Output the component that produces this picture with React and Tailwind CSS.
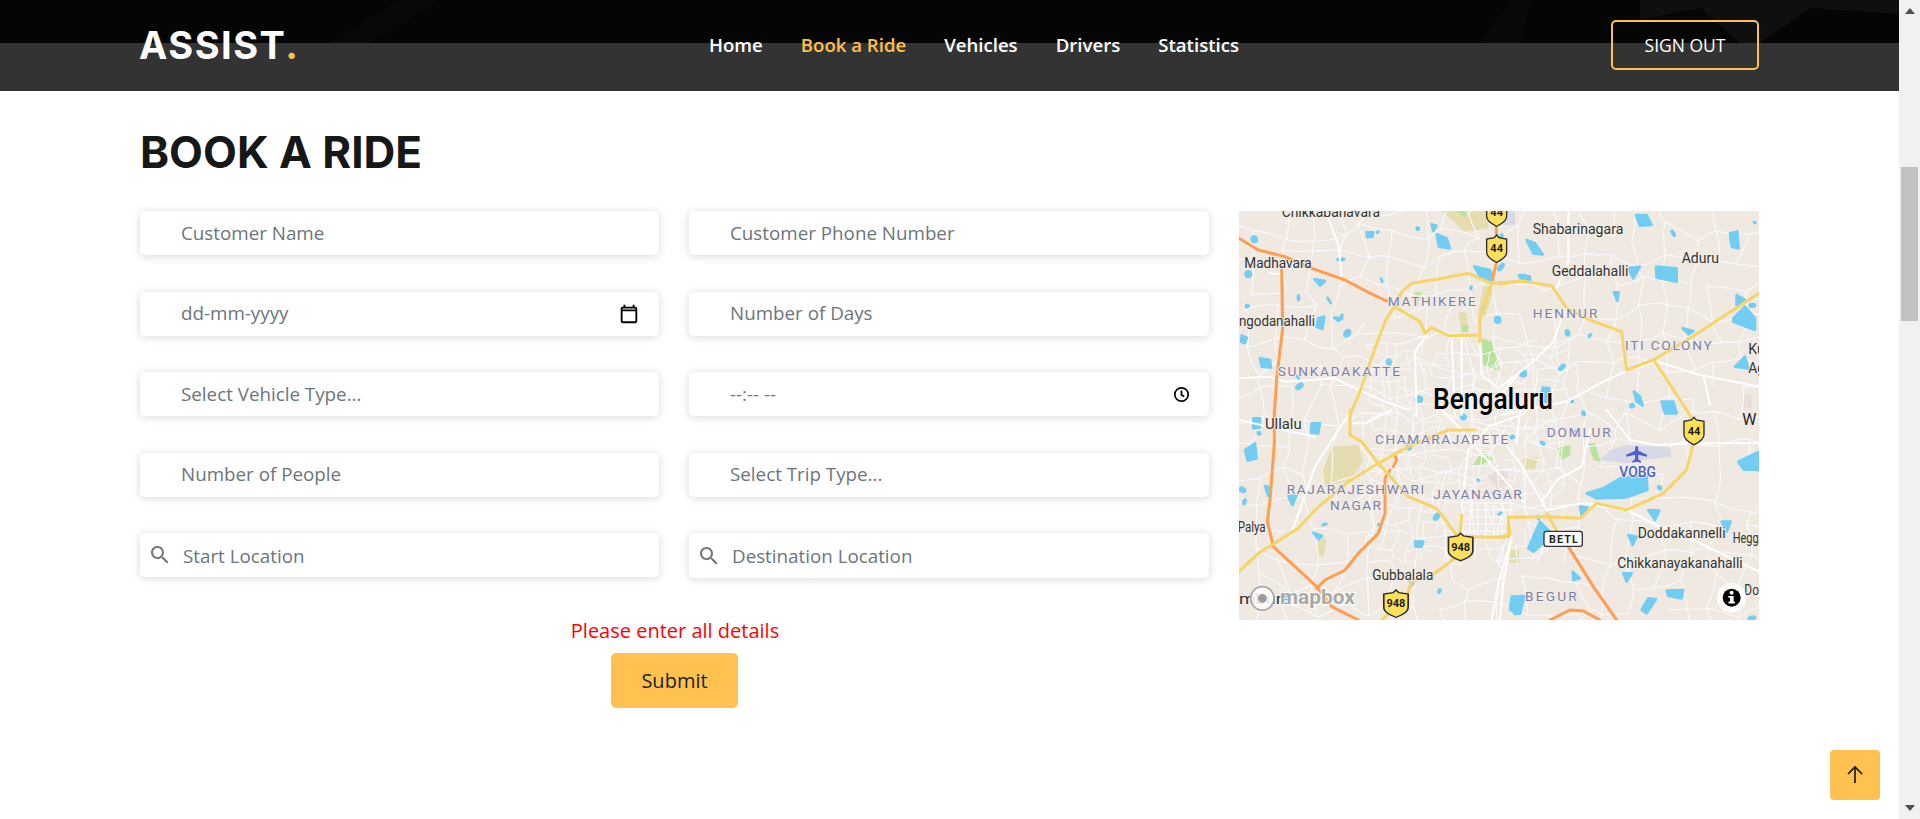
const SEARCH = 'M15.5 14h-.79l-.28-.27C15.41 12.59 16 11.11 16 9.5 16 5.91 13.09 3 9.5 3S3 5.91 3 9.5 5.91 16 9.5 16c1.61 0 3.09-.59 4.23-1.57l.27.28v.79l5 4.99L20.49 19l-4.99-5zm-6 0C7.01 14 5 11.99 5 9.5S7.01 5 9.5 5 14 7.01 14 9.5 11.99 14 9.5 14z'

const NAV = ['Home', 'Book a Ride', 'Vehicles', 'Drivers', 'Statistics']

const FIELDS = [
  { text: 'Customer Name' },
  { text: 'Customer Phone Number' },
  { text: 'dd-mm-yyyy', icon: 'calendar' },
  { text: 'Number of Days' },
  { text: 'Select Vehicle Type...' },
  { text: '--:-- --', icon: 'clock' },
  { text: 'Number of People' },
  { text: 'Select Trip Type...' },
  { text: 'Start Location', search: true },
  { text: 'Destination Location', search: true },
]

/* map panels: coordinates are read off the 3x crops */
const PANELS = {
  a: 'translate(1235 205) scale(0.3333)',
  b: 'translate(1500 205) scale(0.3333)',
  c: 'translate(1235 410) scale(0.3333)',
  d: 'translate(1500 410) scale(0.3333)',
}

const WHITE = [
  ['a', '280,40 310,120 320,210'],
  ['a', '12,520 100,515 150,530 300,520 350,545 450,590 520,615'],
  ['a', '545,630 540,440 575,390'],
  ['a', '650,395 660,630'],
  ['a', '680,400 680,630'],
  ['a', '735,410 740,510 790,550 870,490'],
  ['a', '105,205 140,208'],
  ['b', '205,20 205,170 170,250'],
  ['b', '195,310 160,410 110,460 60,500 0,570'],
  ['b', '0,630 200,590 300,535 385,495 470,470 600,510 777,545'],
  ['b', '610,510 630,600'],
  ['c', '350,0 300,75 240,170 180,340 165,380'],
  ['c', '470,0 390,40 345,40'],
  ['c', '12,30 100,50 240,80'],
  ['c', '680,290 700,120 760,50 870,10'],
  ['c', '830,385 790,520 770,630'],
  ['c', '620,0 680,60 740,130 800,200 870,280'],
  ['d', '0,80 60,160 140,300 240,280 380,300 480,350 600,400 777,485'],
  ['d', '60,0 50,100'],
  ['d', '130,270 170,210 245,170 270,60'],
  ['d', '320,0 390,90 470,105 560,100 777,100'],
  ['d', '35,380 10,520 0,630'],
]

const ORANGE = [
  ['a', '12,100 70,135 150,155 230,190 330,225 400,262 455,288'],
  ['a', '140,195 143,370 125,520 118,630'],
  ['a', '783,50 785,90'],
  ['a', '785,170 772,225'],
  ['c', '118,0 118,100 105,270 97,335 115,410 245,530 290,590 370,630'],
  ['c', '480,135 485,150 475,170'],
  ['c', '465,180 450,205 450,310 430,370 370,430 330,480 270,510 245,535'],
  ['d', '205,410 280,530 350,630'],
  ['d', '150,630 210,600 250,603 300,630'],
]

const YELLOW = [
  ['a', '345,630 375,560 420,430 450,350 478,305 500,260 530,235 610,222 700,205 770,235 870,228'],
  ['a', '478,305 555,350 570,385 590,368 640,392 735,390'],
  ['a', '735,410 735,340 770,235'],
  ['b', '0,238 60,228 155,242 200,310 270,345 365,380 380,495 460,465 570,400 777,265'],
  ['b', '465,470 570,630'],
  ['c', '345,0 345,75 380,95 430,160 520,260 605,295 665,375'],
  ['c', '430,160 520,110 640,60 720,60'],
  ['c', '12,485 70,430 190,355 240,300 340,215 430,160'],
  ['c', '680,315 675,370'],
  ['c', '870,322 820,322 825,375 790,382 700,380'],
  ['c', '660,445 600,490 530,515 510,570 440,630'],
  ['d', '560,0 578,30 578,110 560,180 490,250 380,300 290,280 240,325 150,320 25,322 25,380 0,382'],
  ['d', '140,310 180,380'],
]

const PARKS = [
  ['a', '#e5dcb0', '620,18 760,18 760,70 690,80'],
  ['a', '#b9e29c', '665,18 700,18 690,38'],
  ['a', '#d8d9e6', '810,18 840,18 840,60 805,60'],
  ['a', '#e5dcb0', '745,245 780,240 750,340 725,350'],
  ['a', '#e5dcb0', '670,320 695,325 700,380 680,380'],
  ['a', '#b9e29c', '680,360 700,360 700,382 680,382'],
  ['a', '#b9e29c', '740,398 770,410 798,502 745,480'],
  ['a', '#b9e29c', '540,262 560,262 550,300 535,290'],
  ['c', '#e5dcb0', '290,110 370,105 385,150 350,210 270,230 265,180'],
  ['c', '#b9e29c', '740,125 775,145 740,165 715,165'],
  ['c', '#eadbdc', '755,195 790,175 820,215 790,240'],
  ['c', '#e5dcb0', '250,390 275,385 265,440 245,435'],
  ['c', '#e5dcb0', '825,425 850,420 852,455 828,460'],
  ['d', '#b9e29c', '170,115 210,105 212,135 185,150'],
  ['d', '#b9e29c', '265,100 285,100 302,155 280,150'],
  ['d', '#e5dcb0', '65,145 115,140 105,178 78,175'],
  ['d', '#eadbdc', '0,170 25,190 20,225 0,230'],
  ['d', '#e5dcb0', '28,420 55,420 58,460 25,455'],
  ['b', '#eadbdc', '730,570 755,570 755,610 730,610'],
]

const LAKES = [
  ['a', '605,88 635,100 645,130 612,125'],
  ['a', '718,185 765,195 775,225 740,222'],
  ['a', '75,460 105,465 108,488 80,485'],
  ['a', '250,340 268,335 262,372 245,365'],
  ['a', '238,222 270,228 255,242'],
  ['a', '20,392 36,398 28,415 18,410'],
  ['a', '590,58 605,62 595,78'],
  ['a', '395,82 415,82 412,96 396,96'],
  ['a', '298,338 322,340 310,348'],
  ['a', '852,212 870,210 870,224'],
  ['b', '408,30 440,30 455,60 420,62'],
  ['b', '80,105 105,115 128,148 100,145'],
  ['b', '468,185 530,190 530,230 470,218'],
  ['b', '690,85 712,80 716,130 695,125'],
  ['b', '700,340 735,305 765,340 765,375 700,350'],
  ['b', '710,270 735,285 710,300'],
  ['b', '385,190 420,185 400,220'],
  ['b', '342,262 356,262 352,288'],
  ['b', '548,370 580,378 565,388'],
  ['b', '485,590 520,590 530,625 495,625'],
  ['b', '402,560 420,575 428,602 410,590'],
  ['b', '128,548 148,550 146,590 120,590'],
  ['b', '735,455 745,490 705,485'],
  ['b', '60,210 90,215 90,225 62,222'],
  ['c', '30,120 60,100 65,145 38,152'],
  ['c', '230,40 255,40 250,70 228,68'],
  ['c', '55,25 75,25 75,52 55,55'],
  ['c', '235,368 262,378 250,388'],
  ['c', '540,395 565,395 560,410 542,410'],
  ['c', '160,258 185,255 172,285'],
  ['c', '90,228 102,232 100,258'],
  ['c', '830,560 868,558 855,610 825,600'],
  ['c', '525,510 535,520 528,528'],
  ['d', '260,250 310,235 360,205 440,195 442,240 380,262 290,265'],
  ['d', '120,335 150,365 130,400 100,425 85,415'],
  ['d', '715,155 777,125 777,180 730,178'],
  ['d', '500,542 550,540 545,565 505,558'],
  ['d', '445,565 468,568 440,610 425,600'],
  ['d', '30,585 70,560 60,610 45,612'],
  ['d', '385,375 410,380 398,405'],
  ['d', '445,300 478,302 465,330'],
  ['d', '240,290 262,292 245,318'],
  ['d', '218,485 240,505 220,510'],
  ['d', '665,335 692,335 680,365'],
  ['d', '370,490 395,490 380,515'],
]

const LABELS = [
  ['a', 'Chikkabanavara', 140, 35, 295],
  ['a', 'Madhavara', 28, 190, 202],
  ['a', 'ngodanahalli', 12, 362, 228],
  ['a', 'MATHIKERE', 458, 302, 264, 1],
  ['a', 'SUNKADAKATTE', 128, 513, 367, 1],
  ['b', 'Shabarinagara', 98, 87, 272],
  ['b', 'Aduru', 545, 173, 112],
  ['b', 'Geddalahalli', 155, 213, 230],
  ['b', 'HENNUR', 98, 340, 194, 1],
  ['b', 'ITI COLONY', 375, 435, 260, 1],
  ['b', 'Ku', 745, 447, 50],
  ['b', 'Ag', 745, 503, 50],
  ['c', 'Ullalu', 90, 57, 110],
  ['c', 'CHAMARAJAPETE', 420, 103, 400, 1],
  ['c', 'RAJARAJESHWARI', 155, 252, 413, 1],
  ['c', 'NAGAR', 285, 300, 153, 1],
  ['c', 'JAYANAGAR', 595, 266, 265, 1],
  ['c', 'Palya', 8, 366, 84],
  ['c', 'Gubbalala', 412, 510, 183],
  ['c', 'mbura', 12, 583, 158],
  ['d', 'DOMLUR', 140, 80, 192, 1],
  ['d', 'BEGUR', 75, 572, 155, 1],
  ['d', 'Doddakannelli', 413, 385, 264],
  ['d', 'Hegg', 698, 398, 78],
  ['d', 'Chikkanayakanahalli', 352, 473, 376],
  ['d', 'Do', 733, 555, 44],
]

const SHIELDS = [
  ['a', 785, 22, '44', 1],
  ['a', 785, 130, '44', 1],
  ['d', 582, 62, '44', 1],
  ['c', 677, 410, '948', 1.22],
  ['c', 483, 580, '948', 1.22],
]

function seeded(seed) {
  let s = seed
  return () => {
    s = (s * 16807) % 2147483647
    return s / 2147483647
  }
}

/* small seeded mesh for the minor streets, each edge slightly bent */
function mesh(x0, y0, x1, y1, step, keep, seed) {
  const rnd = seeded(seed)
  const cols = Math.ceil((x1 - x0) / step)
  const rows = Math.ceil((y1 - y0) / step)
  const nodes = []
  for (let j = 0; j <= rows; j++) {
    for (let i = 0; i <= cols; i++) {
      nodes.push([x0 + i * step + (rnd() - 0.5) * step * 0.75, y0 + j * step + (rnd() - 0.5) * step * 0.75])
    }
  }
  const edge = (n, m) => {
    const cx = (n[0] + m[0]) / 2 + (rnd() - 0.5) * step * 0.35
    const cy = (n[1] + m[1]) / 2 + (rnd() - 0.5) * step * 0.35
    return `M${n[0].toFixed(1)} ${n[1].toFixed(1)}Q${cx.toFixed(1)} ${cy.toFixed(1)} ${m[0].toFixed(1)} ${m[1].toFixed(1)}`
  }
  let d = ''
  for (let j = 0; j <= rows; j++) {
    for (let i = 0; i <= cols; i++) {
      const n = nodes[j * (cols + 1) + i]
      if (i < cols && rnd() < keep) d += edge(n, nodes[j * (cols + 1) + i + 1])
      if (j < rows && rnd() < keep) d += edge(n, nodes[(j + 1) * (cols + 1) + i])
    }
  }
  return d
}

function specks(count, seed) {
  const rnd = seeded(seed)
  return Array.from({ length: count }, () => ({
    x: 1239 + rnd() * 520,
    y: 211 + rnd() * 409,
    rx: 1.5 + rnd() * 2.5,
    ry: 1.5 + rnd() * 3.5,
    a: rnd() * 180,
  }))
}

const OUTER_STREETS = mesh(1230, 205, 1770, 630, 27, 0.78, 4711)
const CITY_STREETS = mesh(1370, 340, 1560, 550, 13, 0.72, 91)
const SPECKS = specks(50, 2024)

function CityGrid() {
  const lines = []
  for (let x = 1462; x <= 1512; x += 8) lines.push(`M${x} 503V537`)
  for (let y = 503; y <= 537; y += 7) lines.push(`M1462 ${y}H1512`)
  return <path d={lines.join('')} stroke="#fbfbfe" strokeWidth="1.2" fill="none" />
}

function Roads({ data, color, width }) {
  return data.map(([p, pts], i) => (
    <polyline key={i} transform={PANELS[p]} points={pts} fill="none" stroke={color} strokeWidth={width} strokeLinejoin="round" strokeLinecap="round" />
  ))
}

function BookingMap() {
  return (
    <svg viewBox="1239 211 520 409" className="w-[520px] h-[409px] block" style={{ fontFamily: 'Roboto, sans-serif' }}>
      <rect x="1239" y="211" width="520" height="409" fill="#efe9e2" />
      {PARKS.map(([p, c, pts], i) => <polygon key={i} transform={PANELS[p]} points={pts} fill={c} />)}
      <path d={OUTER_STREETS} stroke="#f9f9fd" strokeWidth="1.1" fill="none" />
      <path d={CITY_STREETS} stroke="#fafafe" strokeWidth="1" fill="none" />
      <CityGrid />
      {SPECKS.map((s, i) => (
        <ellipse key={i} cx={s.x} cy={s.y} rx={s.rx} ry={s.ry} fill="#72cdf2" transform={`rotate(${s.a} ${s.x} ${s.y})`} />
      ))}
      {LAKES.map(([p, pts], i) => (
        <polygon key={i} transform={PANELS[p]} points={pts} fill="#72cdf2" stroke="#72cdf2" strokeWidth="8" strokeLinejoin="round" />
      ))}
      <polygon transform={PANELS.d} points="300,150 330,120 380,105 510,112 515,140 430,150 380,160" fill="#d8d9e6" />
      <Roads data={WHITE} color="#ffffff" width={6} />
      <Roads data={ORANGE} color="#ff9e50" width={9} />
      <Roads data={YELLOW} color="#f6d568" width={9} />

      {LABELS.map(([p, t, x, y, w, district], i) => (
        <text
          key={i}
          transform={PANELS[p]}
          x={x}
          y={y}
          textLength={w}
          lengthAdjust={district ? 'spacing' : 'spacingAndGlyphs'}
          fontSize={district ? 41 : 44}
          fill={district ? '#7a7fa8' : '#333333'}
          stroke="#f3eee8"
          strokeWidth="5"
          paintOrder="stroke"
        >
          {t}
        </text>
      ))}
      <text x="1433" y="409" textLength="120" lengthAdjust="spacingAndGlyphs" fontSize="30" fontWeight="500" fill="#000" stroke="#f3eee8" strokeWidth="2" paintOrder="stroke">Bengaluru</text>
      <text transform={PANELS.d} x="727" y="45" fontSize="48" fill="#222" stroke="#f3eee8" strokeWidth="5" paintOrder="stroke">W</text>

      {/* airport */}
      <g transform={PANELS.d}>
        <path d="M410 108c4 0 5 6 5 14l26 12v6l-26-6v14l8 6v4l-13-3-13 3v-4l8-6v-14l-26 6v-6l26-12c0-8 1-14 5-14z" fill="#4f5fd0" />
        <text x="358" y="202" textLength="110" lengthAdjust="spacingAndGlyphs" fontSize="44" fontWeight="500" fill="#4f5fc8" stroke="#f3eee8" strokeWidth="5" paintOrder="stroke">VOBG</text>
      </g>

      {SHIELDS.map(([p, x, y, t, sx], i) => (
        <g key={i} transform={PANELS[p]}>
          <g transform={`translate(${x} ${y}) scale(${sx} 1)`}>
            <path d="M0 -40L7 -32L30 -28V12C30 28 12 36 0 42C-12 36 -30 28 -30 12V-28L-7 -32Z" fill="#fde05a" stroke="#2b2b2b" strokeWidth="4" />
          </g>
          <text x={x} y={y + 12} textAnchor="middle" fontSize="33" fontWeight="700" fill="#1c1c1c">{t}</text>
        </g>
      ))}

      <g transform={PANELS.d}>
        <rect x="132" y="364" width="115" height="45" rx="7" fill="#fff" stroke="#333" strokeWidth="4" />
        <text x="190" y="398" textAnchor="middle" textLength="86" fontSize="32" fontWeight="700" fill="#222">BETL</text>
      </g>

      {/* attribution */}
      <g transform={PANELS.c}>
        <circle cx="82" cy="565" r="35" fill="#fff" fillOpacity="0.85" stroke="#a5a5a5" strokeWidth="5" />
        <circle cx="82" cy="565" r="13" fill="#9a9a9a" />
        <text x="135" y="583" textLength="225" lengthAdjust="spacingAndGlyphs" fontSize="62" fontWeight="700" fill="#a9a9a9" stroke="#ffffff" strokeOpacity="0.85" strokeWidth="7" paintOrder="stroke">mapbox</text>
      </g>
      <g transform={PANELS.d}>
        <circle cx="695" cy="563" r="44" fill="#fff" fillOpacity="0.9" />
        <circle cx="695" cy="563" r="27" fill="#000" />
        <rect x="690" y="558" width="11" height="22" fill="#fff" />
        <rect x="685" y="558" width="8" height="5" fill="#fff" />
        <rect x="685" y="575" width="20" height="5" fill="#fff" />
        <circle cx="695" cy="548" r="6" fill="#fff" />
      </g>
    </svg>
  )
}

function HeaderPattern() {
  return (
    <svg className="absolute left-0 top-0 w-full h-[43px]" viewBox="0 0 1899 43" preserveAspectRatio="none">
      <rect width="1899" height="43" fill="#050505" />
      <path d="M330 43L400 0H440L370 43ZM1480 43L1510 0H1530L1520 43Z" fill="#0a0807" />
      <path d="M1640 0H1899V14L1810 8L1760 43H1740L1700 8L1640 20Z" fill="#0f0f0f" />
    </svg>
  )
}

function FormField({ text, icon, search }) {
  return (
    <div className="relative flex items-center bg-white rounded-[5px] shadow-[0_1px_10px_rgba(0,0,0,0.16)] h-[44px] last:h-[45px]">
      {search && (
        <svg viewBox="0 0 24 24" className="w-6 h-6 ml-[8px] shrink-0" fill="#757575">
          <path d={SEARCH} />
        </svg>
      )}
      <input
        readOnly
        placeholder={text}
        className={`w-full bg-transparent outline-none text-[18.8px] placeholder:text-[#6c757d] ${search ? 'pl-[11px] pt-[2px]' : 'pl-[41px]'}`}
      />
      {icon === 'calendar' && (
        <svg viewBox="0 0 24 24" className="absolute right-[19px] w-[22px] h-[22px]" fill="#000">
          <path d="M19 4h-1V2h-2v2H8V2H6v2H5c-1.1 0-2 .9-2 2v14c0 1.1.9 2 2 2h14c1.1 0 2-.9 2-2V6c0-1.1-.9-2-2-2zm0 16H5V9h14v11zM5 7V6h14v1H5z" />
        </svg>
      )}
      {icon === 'clock' && (
        <svg viewBox="0 0 24 24" className="absolute right-[18px] w-[19px] h-[19px]" fill="none" stroke="#000" strokeWidth="2.2">
          <circle cx="12" cy="12" r="8.5" />
          <path d="M12 7v5.5l3.5 2" />
        </svg>
      )}
    </div>
  )
}

export default function App() {
  return (
    <div className="flex h-[819px] overflow-hidden bg-white font-['Open_Sans',sans-serif]">
      <div className="flex-1 min-w-0">
        <header className="relative h-[91px] bg-[#333333]">
          <HeaderPattern />
          <div className="relative flex px-[140px]">
            <div className="-ml-[1px] mt-[21px] w-[201px] text-[38px] leading-[48px] font-bold tracking-[1.5px] text-white font-['Inter',sans-serif]">
              ASSIST<span className="text-[#ffc04d]">.</span>
            </div>
            <nav className="flex gap-[38px] mt-[31px] ml-[369px] h-[27px] text-[18.6px] leading-[27px] font-semibold text-white">
              {NAV.map(n => (
                <a key={n} className={n === 'Book a Ride' ? 'text-[#ffc04d]' : ''}>{n}</a>
              ))}
            </nav>
            <button className="ml-auto mt-[20px] w-[148px] h-[50px] border-2 border-[#ffc04d] rounded-[5px] text-[17.5px] text-white">
              SIGN OUT
            </button>
          </div>
        </header>

        <main className="px-[140px]">
          <h1 className="pt-[34px] text-[44px] leading-[54px] font-bold text-[#171717] font-['Inter',sans-serif]">BOOK A RIDE</h1>

          <div className="grid grid-cols-[1069px_520px] gap-x-[30px] mt-[32px]">
            <div>
              <div className="grid grid-cols-[519px_520px] gap-x-[30px] gap-y-[36.5px]">
                {FIELDS.map(f => <FormField key={f.text} {...f} />)}
              </div>
              <p className="mt-[39px] pl-[1px] text-center text-[20px] leading-[27px] text-[#ff0000]">Please enter all details</p>
              <div className="flex justify-center mt-[9px]">
                <button className="w-[127px] h-[55px] rounded-[5px] bg-[#ffc250] text-[20px] text-[#212529]">Submit</button>
              </div>
            </div>
            <BookingMap />
          </div>
        </main>
      </div>

      <aside className="relative w-[21px] shrink-0 flex flex-col items-center bg-[#f1f1f1]">
        <div className="mt-[8px] w-0 h-0 border-x-[5px] border-x-transparent border-b-[6px] border-b-[#505050]" />
        <div className="mt-[153px] w-[17px] h-[154px] bg-[#c1c1c1]" />
        <div className="mt-auto mb-[8px] w-0 h-0 border-x-[5px] border-x-transparent border-t-[6px] border-t-[#505050]" />
        <button className="absolute right-[40px] top-[750px] w-[50px] h-[50px] rounded-[4px] bg-[#ffc250] flex items-center justify-center">
          <svg viewBox="0 0 24 24" className="w-6 h-6" fill="none" stroke="#111" strokeWidth="1.6">
            <path d="M12 20V4M5 11l7-7 7 7" />
          </svg>
        </button>
      </aside>
    </div>
  )
}
